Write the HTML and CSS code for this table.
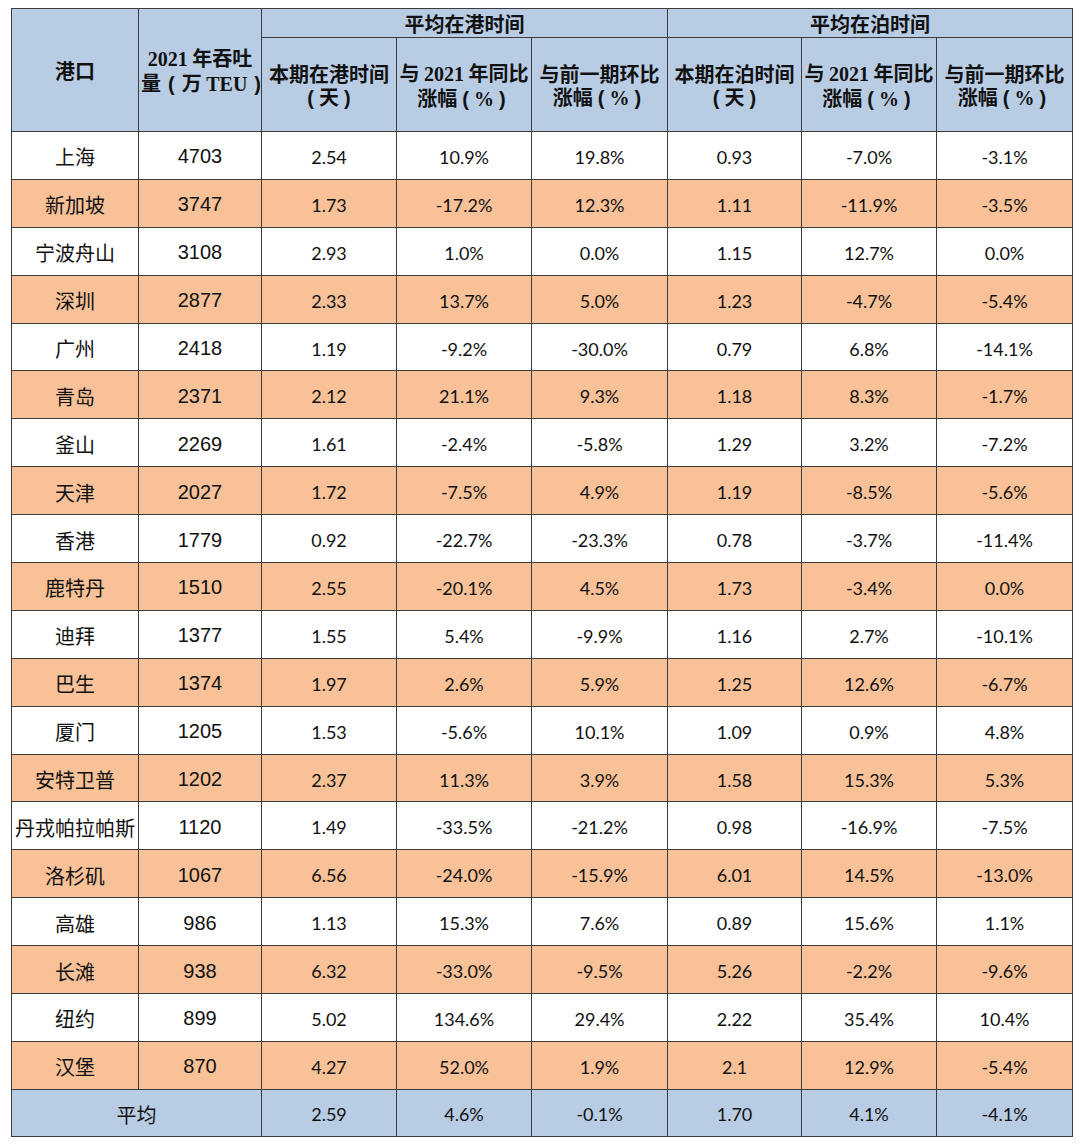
FILE: index.html
```html
<!DOCTYPE html>
<html lang="zh">
<head>
<meta charset="utf-8">
<title>港口在港时间</title>
<link rel="stylesheet" href="styles.css">
</head>
<body>
<div class="page">
<table class="ports">
<colgroup>
<col class="c-port"><col class="c-teu"><col class="c-a"><col class="c-b"><col class="c-c"><col class="c-d"><col class="c-e"><col class="c-f">
</colgroup>
<thead>
<tr class="group">
<th rowspan="2" class="h-port">港口</th>
<th rowspan="2" class="h-teu"><div class="clip"><span class="l1"><span class="ser">2021</span> 年吞吐</span><span class="l2">量<span class="par">(</span>万 <span class="ser">TEU</span><span class="par">)</span></span></div></th>
<th colspan="3">平均在港时间</th>
<th colspan="3">平均在泊时间</th>
</tr>
<tr class="sub">
<th>本期在港时间<br><span class="par">(</span>天<span class="par">)</span></th>
<th>与 <span class="ser">2021</span> 年同比<br>涨幅<span class="par">(</span><span class="ser">%</span><span class="par">)</span></th>
<th>与前一期环比<br>涨幅<span class="par">(</span><span class="ser">%</span><span class="par">)</span></th>
<th>本期在泊时间<br><span class="par">(</span>天<span class="par">)</span></th>
<th>与 <span class="ser">2021</span> 年同比<br>涨幅<span class="par">(</span><span class="ser">%</span><span class="par">)</span></th>
<th>与前一期环比<br>涨幅<span class="par">(</span><span class="ser">%</span><span class="par">)</span></th>
</tr>
</thead>
<tbody>
<tr class="w"><td class="p">上海</td><td class="t">4703</td><td>2.54</td><td>10.9%</td><td>19.8%</td><td>0.93</td><td>-7.0%</td><td>-3.1%</td></tr>
<tr class="o"><td class="p">新加坡</td><td class="t">3747</td><td>1.73</td><td>-17.2%</td><td>12.3%</td><td>1.11</td><td>-11.9%</td><td>-3.5%</td></tr>
<tr class="w"><td class="p">宁波舟山</td><td class="t">3108</td><td>2.93</td><td>1.0%</td><td>0.0%</td><td>1.15</td><td>12.7%</td><td>0.0%</td></tr>
<tr class="o"><td class="p">深圳</td><td class="t">2877</td><td>2.33</td><td>13.7%</td><td>5.0%</td><td>1.23</td><td>-4.7%</td><td>-5.4%</td></tr>
<tr class="w"><td class="p">广州</td><td class="t">2418</td><td>1.19</td><td>-9.2%</td><td>-30.0%</td><td>0.79</td><td>6.8%</td><td>-14.1%</td></tr>
<tr class="o"><td class="p">青岛</td><td class="t">2371</td><td>2.12</td><td>21.1%</td><td>9.3%</td><td>1.18</td><td>8.3%</td><td>-1.7%</td></tr>
<tr class="w"><td class="p">釜山</td><td class="t">2269</td><td>1.61</td><td>-2.4%</td><td>-5.8%</td><td>1.29</td><td>3.2%</td><td>-7.2%</td></tr>
<tr class="o"><td class="p">天津</td><td class="t">2027</td><td>1.72</td><td>-7.5%</td><td>4.9%</td><td>1.19</td><td>-8.5%</td><td>-5.6%</td></tr>
<tr class="w"><td class="p">香港</td><td class="t">1779</td><td>0.92</td><td>-22.7%</td><td>-23.3%</td><td>0.78</td><td>-3.7%</td><td>-11.4%</td></tr>
<tr class="o"><td class="p">鹿特丹</td><td class="t">1510</td><td>2.55</td><td>-20.1%</td><td>4.5%</td><td>1.73</td><td>-3.4%</td><td>0.0%</td></tr>
<tr class="w"><td class="p">迪拜</td><td class="t">1377</td><td>1.55</td><td>5.4%</td><td>-9.9%</td><td>1.16</td><td>2.7%</td><td>-10.1%</td></tr>
<tr class="o"><td class="p">巴生</td><td class="t">1374</td><td>1.97</td><td>2.6%</td><td>5.9%</td><td>1.25</td><td>12.6%</td><td>-6.7%</td></tr>
<tr class="w"><td class="p">厦门</td><td class="t">1205</td><td>1.53</td><td>-5.6%</td><td>10.1%</td><td>1.09</td><td>0.9%</td><td>4.8%</td></tr>
<tr class="o"><td class="p">安特卫普</td><td class="t">1202</td><td>2.37</td><td>11.3%</td><td>3.9%</td><td>1.58</td><td>15.3%</td><td>5.3%</td></tr>
<tr class="w"><td class="p">丹戎帕拉帕斯</td><td class="t">1120</td><td>1.49</td><td>-33.5%</td><td>-21.2%</td><td>0.98</td><td>-16.9%</td><td>-7.5%</td></tr>
<tr class="o"><td class="p">洛杉矶</td><td class="t">1067</td><td>6.56</td><td>-24.0%</td><td>-15.9%</td><td>6.01</td><td>14.5%</td><td>-13.0%</td></tr>
<tr class="w"><td class="p">高雄</td><td class="t">986</td><td>1.13</td><td>15.3%</td><td>7.6%</td><td>0.89</td><td>15.6%</td><td>1.1%</td></tr>
<tr class="o"><td class="p">长滩</td><td class="t">938</td><td>6.32</td><td>-33.0%</td><td>-9.5%</td><td>5.26</td><td>-2.2%</td><td>-9.6%</td></tr>
<tr class="w"><td class="p">纽约</td><td class="t">899</td><td>5.02</td><td>134.6%</td><td>29.4%</td><td>2.22</td><td>35.4%</td><td>10.4%</td></tr>
<tr class="o"><td class="p">汉堡</td><td class="t">870</td><td>4.27</td><td>52.0%</td><td>1.9%</td><td>2.1</td><td>12.9%</td><td>-5.4%</td></tr>
</tbody>
<tfoot>
<tr class="avg"><td colspan="2" class="p">平均</td><td>2.59</td><td>4.6%</td><td>-0.1%</td><td>1.70</td><td>4.1%</td><td>-4.1%</td></tr>
</tfoot>
</table>
</div>
</body>
</html>
```

FILE: styles.css
```css
html, body {
  margin: 0;
  padding: 0;
  background: #ffffff;
}
.page {
  padding: 8px 0 0 11px;
}
.ports {
  border-collapse: collapse;
  table-layout: fixed;
  width: 1061px;
  color: #111111;
  font-family: Lato, "Noto Sans CJK SC", sans-serif;
  font-size: 18px;
}
.c-port { width: 127px; }
.c-teu { width: 123px; }
.c-a { width: 135px; }
.c-b { width: 135px; }
.c-c { width: 136px; }
.c-d { width: 134px; }
.c-e { width: 135px; }
.c-f { width: 136px; }

.ports th, .ports td {
  border: 1px solid #3c3c3c;
  text-align: center;
  vertical-align: middle;
  padding: 0;
}
.ports th {
  background: #b8cce4;
  font-family: "Noto Sans CJK SC", sans-serif;
  font-weight: 700;
  font-size: 20px;
  line-height: 23px;
  white-space: nowrap;
  overflow: hidden;
}
.ser {
  font-family: "Liberation Serif", serif;
  font-weight: 700;
}
.par {
  font-family: "Liberation Sans", sans-serif;
  font-weight: 700;
  margin: 0 5px;
}
.group th {
  height: 28px;
}
.sub th {
  height: 91px;
  padding-top: 2px;
}
.h-teu .clip {
  overflow: hidden;
  white-space: nowrap;
  line-height: 24px;
  padding-top: 2px;
}
.h-teu .l1 {
  display: block;
  text-align: center;
}
.h-teu .l2 {
  display: block;
  text-align: left;
  padding-left: 2px;
}
.h-teu .l2 .par {
  margin: 0 7px;
}
.h-port {
  padding-top: 4px;
}
.ports td {
  height: 43.9px;
  padding-top: 3px;
}
.ports td.p {
  font-family: "Noto Sans CJK SC", sans-serif;
  font-size: 20px;
  white-space: nowrap;
}
.ports td.t {
  font-family: "Liberation Sans", Arial, sans-serif;
  font-size: 20px;
}
tr.w td { background: #ffffff; }
tr.o td { background: #f9c197; }
tr.avg td { background: #b8cce4; height: 43px; }
```
